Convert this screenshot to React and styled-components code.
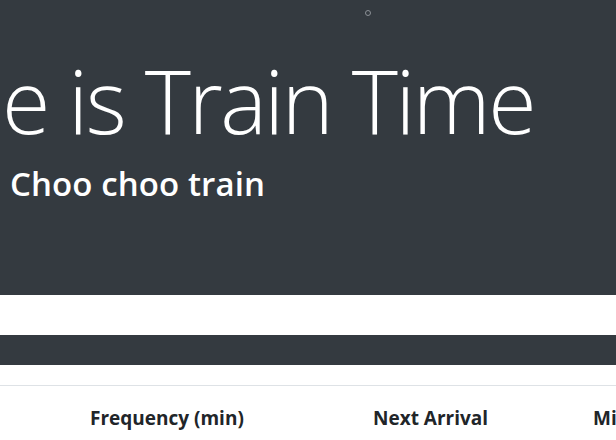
import React from "react";
import styled, { createGlobalStyle } from "styled-components";

const Global = createGlobalStyle`
  html, body { margin: 0; padding: 0; background: #ffffff; }
  body { font-family: "Open Sans", "Noto Sans", sans-serif; color: #212529; overflow: hidden; }
`;

const Page = styled.div`
  width: 616px;
  height: 440px;
  overflow: hidden;
  display: flex;
  flex-direction: column;
`;

const Jumbotron = styled.header`
  background: #343a40;
  height: 295px;
  display: flex;
  flex-direction: column;
  color: #ffffff;
  box-sizing: border-box;
  flex: none;
`;

const DotRow = styled.div`
  height: 16px;
  padding-top: 10px;
  padding-left: 365px;
  box-sizing: border-box;
`;

const Dot = styled.span`
  display: block;
  width: 6px;
  height: 6px;
  border-radius: 50%;
  border: 1px solid #8b9096;
  box-sizing: border-box;
`;

const Title = styled.h1`
  margin: 40px 0 0 2px;
  font-family: "Open Sans", sans-serif;
  font-weight: 300;
  font-size: 88px;
  line-height: 1;
  letter-spacing: -2.45px;
  white-space: nowrap;
`;

const Subtitle = styled.h2`
  margin: 20px 0 0 10px;
  font-family: "Open Sans", sans-serif;
  font-weight: 600;
  font-size: 33px;
  line-height: 1.2;
  letter-spacing: 0.1px;
  white-space: nowrap;
`;

const Band = styled.div`
  height: ${(p) => p.$h}px;
  background: ${(p) => (p.$dark ? "#343a40" : "#ffffff")};
  flex: none;
`;

const Table = styled.table`
  border-collapse: collapse;
  table-layout: fixed;
  width: 900px;
  border-top: 1px solid #dee2e6;
  flex: none;
`;

const Th = styled.th`
  text-align: left;
  font-family: "Open Sans", sans-serif;
  font-weight: 700;
  font-size: 19px;
  line-height: normal;
  padding: 19px 0 0 ${(p) => p.$pl || 0}px;
  white-space: nowrap;
  box-sizing: border-box;
  width: ${(p) => (p.$w ? `${p.$w}px` : "auto")};
`;

export default function App() {
  return (
    <Page>
      <Global />
      <Jumbotron>
        <DotRow>
          <Dot />
        </DotRow>
        <Title>e is Train Time</Title>
        <Subtitle>Choo choo train</Subtitle>
      </Jumbotron>
      <Band $h={40} />
      <Band $h={30} $dark />
      <Band $h={20} />
      <Table>
        <thead>
          <tr>
            <Th $pl={90} $w={373}>Frequency (min)</Th>
            <Th $w={220}>Next Arrival</Th>
            <Th>Minutes Away</Th>
          </tr>
        </thead>
      </Table>
    </Page>
  );
}
